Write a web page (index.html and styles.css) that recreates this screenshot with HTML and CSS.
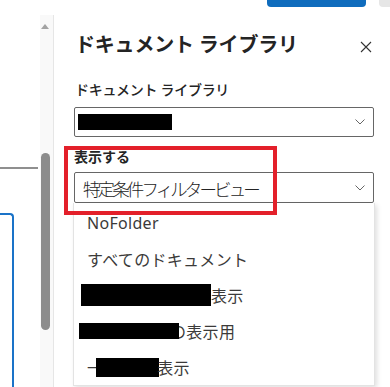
FILE: index.html
```html
<!DOCTYPE html>
<html lang="ja">
<head>
<meta charset="utf-8">
<link rel="stylesheet" href="styles.css">
</head>
<body>
<div class="page">
  <div class="topbar">
    <span class="btn-primary"></span>
    <span class="btn-secondary"></span>
  </div>
  <div class="main">
    <div class="left">
      <div class="hline"></div>
      <div class="bluebox"></div>
    </div>
    <div class="scroll">
      <div class="arrow"></div>
      <div class="thumb"></div>
    </div>
    <div class="panel">
      <div class="title-row">
        <h1 class="title">ドキュメント ライブラリ</h1>
        <svg class="close" width="12" height="12" viewBox="0 0 12 12"><path d="M1 1 L11 11 M11 1 L1 11" stroke="#333" stroke-width="1.1" fill="none"/></svg>
      </div>
      <div class="label label-lib">ドキュメント ライブラリ</div>
      <div class="select select-lib">
        <span class="redact redact-lib"></span>
        <svg class="chev" width="10" height="6" viewBox="0 0 10 6"><path d="M0.5 0.5 L5 5 L9.5 0.5" stroke="#666" stroke-width="1" fill="none"/></svg>
      </div>
      <div class="label label-view">表示する</div>
      <div class="select select-view">
        <span class="select-text">特定条件フィルタービュー</span>
        <svg class="chev" width="10" height="6" viewBox="0 0 10 6"><path d="M0.5 0.5 L5 5 L9.5 0.5" stroke="#666" stroke-width="1" fill="none"/></svg>
      </div>
      <ul class="options">
        <li class="option">NoFolder</li>
        <li class="option">すべてのドキュメント</li>
        <li class="option"><span class="redact r1"></span>表示</li>
        <li class="option"><span class="redact r2"></span>の表示用</li>
        <li class="option">一<span class="redact r3"></span>表示</li>
      </ul>
      <div class="highlight"></div>
    </div>
  </div>
</div>
</body>
</html>
```

FILE: styles.css
```css
* { box-sizing: border-box; }
html, body { margin: 0; padding: 0; background: #fff; }
body {
  font-family: "Noto Sans", "Noto Sans CJK JP", sans-serif;
  color: #242424;
  width: 390px;
  height: 387px;
  overflow: hidden;
}
.page { display: flex; flex-direction: column; height: 387px; }

.topbar { display: flex; height: 15px; flex-shrink: 0; }
.btn-primary {
  margin-left: 267px;
  width: 99px;
  height: 7px;
  background: #0f6cbd;
  border-radius: 0 0 4px 4px;
}
.btn-secondary {
  margin-left: 13px;
  flex: 1;
  height: 7px;
  background: #e6e6e6;
  border-radius: 0 0 0 4px;
}

.main { display: flex; flex: 1; min-height: 0; }

.left { width: 40px; display: flex; flex-direction: column; flex-shrink: 0; }
.hline { margin-top: 152px; width: 38px; height: 2px; background: #8f8f8f; }
.bluebox {
  margin-top: 44px;
  width: 14px;
  flex: 1;
  border: 2px solid #1a73c8;
  border-left: none;
  border-bottom: none;
  border-top-right-radius: 4px;
}

.scroll {
  width: 14px;
  flex-shrink: 0;
  background: #f9f9f9;
  border-right: 1px solid #e6e6e6;
  display: flex;
  flex-direction: column;
}
.arrow {
  margin: 9px 0 0 1px;
  width: 0; height: 0;
  border-left: 4.5px solid transparent;
  border-right: 4.5px solid transparent;
  border-bottom: 5px solid #a3a3a3;
}
.thumb {
  margin: 124px 0 0 1px;
  width: 9px;
  height: 177px;
  background: #8c8c8c;
  border-radius: 5px;
}

.panel {
  position: relative;
  flex: 1;
  padding: 16px 16px 0 20px;
  display: flex;
  flex-direction: column;
}

.title-row {
  display: flex;
  align-items: center;
  justify-content: space-between;
  height: 28px;
}
.title {
  margin: 0 0 0 1px;
  font-size: 20px;
  font-weight: 700;
  line-height: 28px;
  letter-spacing: -0.2px;
  color: #242424;
}
.close { margin: 4px 2px 0 0; }

.label {
  font-size: 14px;
  line-height: 20px;
  font-weight: 600;
  color: #242424;
}
.label-lib { margin: 21px 0 0 1px; letter-spacing: -0.3px; font-weight: 500; }
.label-view { margin: 10px 0 0 0; }

.select {
  display: flex;
  align-items: center;
  justify-content: space-between;
  border: 1px solid #666;
  border-radius: 2px;
  padding: 0 8px 0 3px;
}
.select-lib { margin-top: 7px; height: 31px; }
.select-view { margin-top: 5px; height: 32px; padding-left: 8px; }
.select-text {
  font-size: 17.5px;
  font-weight: 300;
  letter-spacing: -2.9px;
  color: #242424;
  line-height: 22px;
  margin-top: 2px;
}
.chev { flex-shrink: 0; }

.redact { display: inline-block; background: #000; }
.redact-lib { width: 94px; height: 16px; }

.options {
  list-style: none;
  margin: 0 -1px 0 -1px;
  padding: 2px 0 0 0;
  flex: 1;
  margin-bottom: 1px;
  border: 1px solid #e3e3e3;
  border-top: none;
  box-shadow: 2px 2px 5px rgba(0,0,0,0.13);
  background: #fff;
}
.option {
  height: 36px;
  display: flex;
  align-items: center;
  padding-left: 13px;
  font-size: 16px;
  letter-spacing: 0.3px;
  color: #3b3a39;
  white-space: nowrap;
}
.r1 { width: 130px; height: 22px; margin-left: -6px; }
.r2 { width: 100px; height: 16px; margin-left: -8px; margin-right: -9px; position: relative; z-index: 1; }
.r3 { width: 63px; height: 19px; margin-left: -7px; margin-right: -2px; }

.highlight {
  position: absolute;
  left: 10px;
  top: 131px;
  width: 213px;
  height: 69px;
  border: 4px solid #e3202a;
}
```
